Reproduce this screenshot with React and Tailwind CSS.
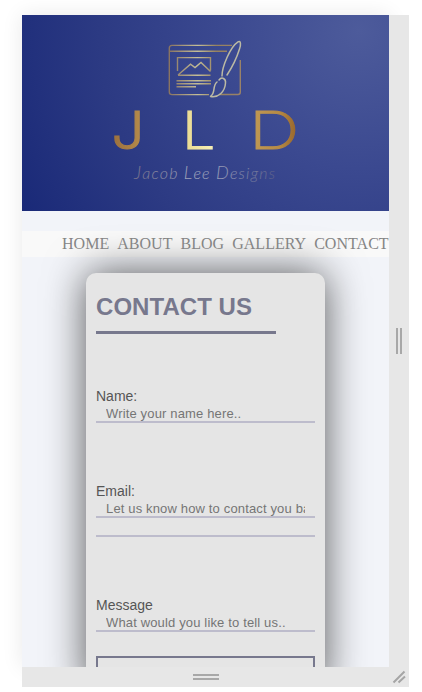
import React from "react";

function Logo() {
  return (
    <svg className="block h-[196px] w-full" viewBox="22 15 367 196" fill="none">
      <defs>
        <linearGradient id="frame" x1="168" y1="0" x2="242" y2="0" gradientUnits="userSpaceOnUse">
          <stop offset="0" stopColor="#86705f" />
          <stop offset=".4" stopColor="#c4be98" />
          <stop offset=".65" stopColor="#96825f" />
          <stop offset="1" stopColor="#9a8268" />
        </linearGradient>
        <linearGradient id="j" x1="0" y1="0" x2="1" y2="0">
          <stop offset="0" stopColor="#9a6f3d" />
          <stop offset="1" stopColor="#b78d4c" />
        </linearGradient>
        <linearGradient id="l" x1="0" y1="0" x2="1" y2="0">
          <stop offset="0" stopColor="#e7d78c" />
          <stop offset="1" stopColor="#f8f0b6" />
        </linearGradient>
        <linearGradient id="d" x1="0" y1="0" x2="1" y2="0">
          <stop offset="0" stopColor="#c19a55" />
          <stop offset=".6" stopColor="#b78b45" />
          <stop offset="1" stopColor="#946229" />
        </linearGradient>
        <linearGradient id="script" x1="0" y1="0" x2="1" y2="0">
          <stop offset="0" stopColor="#77718a" />
          <stop offset=".45" stopColor="#a5abc0" />
          <stop offset=".7" stopColor="#8b90ae" />
          <stop offset="1" stopColor="#5c6088" />
        </linearGradient>
      </defs>
      <g stroke="url(#frame)" strokeWidth="1.4">
        <path d="M232 45.4H172Q169.3 45.5 169.3 48V92Q169.3 94.6 172 94.6H209M219 94.5H238Q240.3 94.5 240.3 92V60" />
        <path d="M170 51.2H227" />
        <path d="M177.5 71V57.6H210.5V70.5M178 75.2H210.5M178 75L190.5 64.2L195 67.5L201 62.5L210.5 71.5" />
        <path d="M176.5 80.8H211M176.5 83.8H211M176.5 86.8H196" />
      </g>
      <g stroke="#bcbaa4" strokeWidth="1.5" strokeLinejoin="round" strokeLinecap="round">
        <path d="M222 76C222 67 230 47 238 41.8C241 40 241 45 239.5 49C236 60 231 69 227 75" />
        <path d="M219 80C222 76 226 79 225.5 83C225 92 218 98 210.5 96.5C216 93 212 86 217 82" />
      </g>
      <g fontFamily="Lato, Liberation Sans, sans-serif" fontSize="53.5" fontWeight="300" strokeWidth="1.1">
        <text fill="url(#j)" stroke="url(#j)" fontFamily="Inter, sans-serif" fontSize="52.5" x="111.5" y="148.5" textLength="33" lengthAdjust="spacingAndGlyphs">J</text>
        <text fill="url(#l)" stroke="url(#l)" x="181.5" y="148.5" textLength="31.5" lengthAdjust="spacingAndGlyphs">L</text>
        <text fill="url(#d)" stroke="url(#d)" x="249.5" y="148.5" textLength="49" lengthAdjust="spacingAndGlyphs">D</text>
      </g>
      <text fill="url(#script)" x="134" y="179" fontFamily="Lato, cursive" fontStyle="italic" fontWeight="300" fontSize="16" textLength="141" lengthAdjust="spacing">
        <tspan fontSize="18">J</tspan>acob <tspan fontSize="18">L</tspan>ee <tspan fontSize="18">D</tspan>esigns
      </text>
    </svg>
  );
}

function Field({ label, hint, className }) {
  return (
    <label className={"block h-[35px] text-[14px] leading-[17px] text-[#555] " + className}>
      {label}
      <input
        placeholder={hint}
        className="block h-[18px] w-full border-b-2 border-[#bdbccc] bg-transparent px-[10px] text-[13px] leading-4 tracking-[0.15px] outline-none placeholder:text-[#757575]"
      />
    </label>
  );
}

export default function App() {
  return (
    <div className="h-[692px] w-[422px] overflow-hidden bg-white pt-[15px] pl-[22px]">
      <div className="grid h-[672px] w-[387px] grid-cols-[367px_20px] grid-rows-[652px_20px] bg-[#e7e7e7]">
        <div className="h-[652px] shadow-[0_0_20px_rgba(0,0,0,0.09)]">
          <main className="h-full overflow-hidden bg-[#f2f4f9]">
            <header className="bg-[radial-gradient(circle_at_92%_8%,#4d5b9b_0%,#3b4990_36%,#2c3a83_68%,#152575_108%)]">
              <Logo />
            </header>
            <nav className="mt-5 flex h-[26px] items-center gap-2 bg-[#f9f9f9] pl-10 font-['Liberation_Serif',serif] text-[16px] tracking-[0.03px] whitespace-nowrap text-[#858585]">
              <a>HOME</a>
              <a>ABOUT</a>
              <a>BLOG</a>
              <a>GALLERY</a>
              <a>CONTACT</a>
            </nav>
            <section className="mt-4 ml-16 h-[418px] w-[239px] rounded-[10px] bg-[#e5e5e5] px-[10px] pt-[18px] font-['Liberation_Sans',Arial,sans-serif] shadow-[0_0_40px_rgba(0,0,0,0.65)]">
              <h1 className="text-[24px] leading-8 font-bold tracking-[0.05px] whitespace-nowrap text-[#77788d]">CONTACT US</h1>
              <div className="mt-2 h-[3px] w-[180px] bg-[#77788d]" />
              <Field label="Name:" hint="Write your name here.." className="mt-[54px]" />
              <Field label="Email:" hint="Let us know how to contact you back.." className="mt-[60px]" />
              <div className="mt-[17px] h-[2px] bg-[#bdbccc]" />
              <Field label="Message" hint="What would you like to tell us.." className="mt-[60px]" />
              <div className="mt-6 h-10 border-2 border-[#77788d]" />
            </section>
          </main>
        </div>
        <div className="z-10 flex items-center justify-center gap-[2px] bg-[#e7e7e7]">
          <i className="h-[26px] w-[2px] bg-[#a8a8a8]" />
          <i className="h-[26px] w-[2px] bg-[#a8a8a8]" />
        </div>
        <div className="z-10 flex flex-col items-center justify-center gap-[2px] bg-[#e7e7e7]">
          <i className="h-[2px] w-[26px] bg-[#a8a8a8]" />
          <i className="h-[2px] w-[26px] bg-[#a8a8a8]" />
        </div>
        <div className="z-10 bg-[#e7e7e7]">
          <svg className="block" width="20" height="20" stroke="#a5a5a5" strokeWidth="2">
            <path d="M4.5 15.5L15.5 4.5M9.5 15.5L16 9.5" />
          </svg>
        </div>
      </div>
    </div>
  );
}
